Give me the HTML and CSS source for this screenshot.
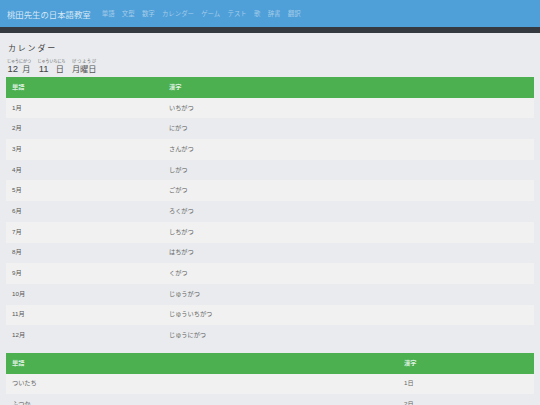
FILE: index.html
```html
<!DOCTYPE html>
<html lang="ja">
<head>
<meta charset="utf-8">
<title>カレンダー</title>
<link rel="stylesheet" href="styles.css">
</head>
<body>
<nav class="navbar">
  <a class="brand" href="#">桃田先生の日本語教室</a>
  <ul class="nav">
    <li>単語</li><li>文型</li><li>数字</li><li>カレンダー</li><li>ゲーム</li><li>テスト</li><li>歌</li><li>辞書</li><li>翻訳</li>
  </ul>
</nav>
<main class="content">
  <h1 class="title">カレンダー</h1>
  <p class="today"><ruby class="date month"><b>12</b><span class="unit">月</span><rt>じゅうにがつ</rt></ruby><ruby class="date day"><b>11</b><span class="unit">日</span><rt>じゅういちにち</rt></ruby><ruby class="date"><span class="unit">月曜日</span><rt>げつようび</rt></ruby></p>
  <table class="table months">
    <thead><tr><th>単語</th><th>漢字</th></tr></thead>
    <tbody>
      <tr><td>1月</td><td>いちがつ</td></tr>
      <tr><td>2月</td><td>にがつ</td></tr>
      <tr><td>3月</td><td>さんがつ</td></tr>
      <tr><td>4月</td><td>しがつ</td></tr>
      <tr><td>5月</td><td>ごがつ</td></tr>
      <tr><td>6月</td><td>ろくがつ</td></tr>
      <tr><td>7月</td><td>しちがつ</td></tr>
      <tr><td>8月</td><td>はちがつ</td></tr>
      <tr><td>9月</td><td>くがつ</td></tr>
      <tr><td>10月</td><td>じゅうがつ</td></tr>
      <tr><td>11月</td><td>じゅういちがつ</td></tr>
      <tr><td>12月</td><td>じゅうにがつ</td></tr>
    </tbody>
  </table>
  <table class="table days">
    <thead><tr><th>単語</th><th>漢字</th></tr></thead>
    <tbody>
      <tr><td>ついたち</td><td>1日</td></tr>
      <tr><td>ふつか</td><td>2日</td></tr>
    </tbody>
  </table>
</main>
</body>
</html>
```
FILE: styles.css
```css
* { box-sizing: border-box; }
html, body { margin: 0; padding: 0; height: 405px; overflow: hidden; }
body {
  background: #e9ebee;
  color: #333;
  font-family: "Liberation Sans", "Noto Sans CJK JP", sans-serif;
}
.navbar {
  height: 33px;
  background: #4f9fd8;
  border-bottom: 6px solid #343a40;
  display: flex;
  align-items: center;
  padding-left: 7px;
}
.brand {
  color: #d5e8f6;
  font-size: 8.4px;
  text-decoration: none;
  margin-right: 11px;
}
.nav {
  list-style: none;
  display: flex;
  gap: 7.3px;
  margin: 0;
  padding: 0;
  color: #a5cdea;
  font-size: 6.4px;
}
.content { padding: 0 6px; }
.title {
  font-size: 8px;
  font-weight: 400;
  letter-spacing: 1.8px;
  margin: 11px 0 0 2px;
  line-height: 10px;
  color: #444;
}
.today {
  margin: 0 0 0 1px;
  height: 23px;
  padding-top: 10px;
  font-size: 9.5px;
  color: #555;
  line-height: 10px;
}
.date { margin-right: 6.5px; }
.date b { font-weight: 400; color: #444; }
.unit { font-size: 8.2px; }
.month .unit { margin-left: 3px; }
.day .unit { margin-left: 4.5px; }
.today rt { font-size: 4px; line-height: 3.5px; color: #666; }
.table {
  width: 528px;
  table-layout: fixed;
  border-collapse: collapse;
  font-size: 6.2px;
  color: #555;
}
.months th:first-child { width: 157px; }
.days { margin-top: 7px; }
.days th:first-child { width: 392px; }
.table th {
  height: 20.7px;
  padding: 0 6px 1px;
  background: #4caf50;
  color: #dff1e0;
  font-weight: 700;
  text-align: left;
}
.table td {
  height: 20.7px;
  padding: 0 6px 2px;
}
.table tbody tr:nth-child(odd) { background: #f1f1f1; }
.table td:nth-child(2) { color: #666; }
.days td:first-child { color: #666; }
```
